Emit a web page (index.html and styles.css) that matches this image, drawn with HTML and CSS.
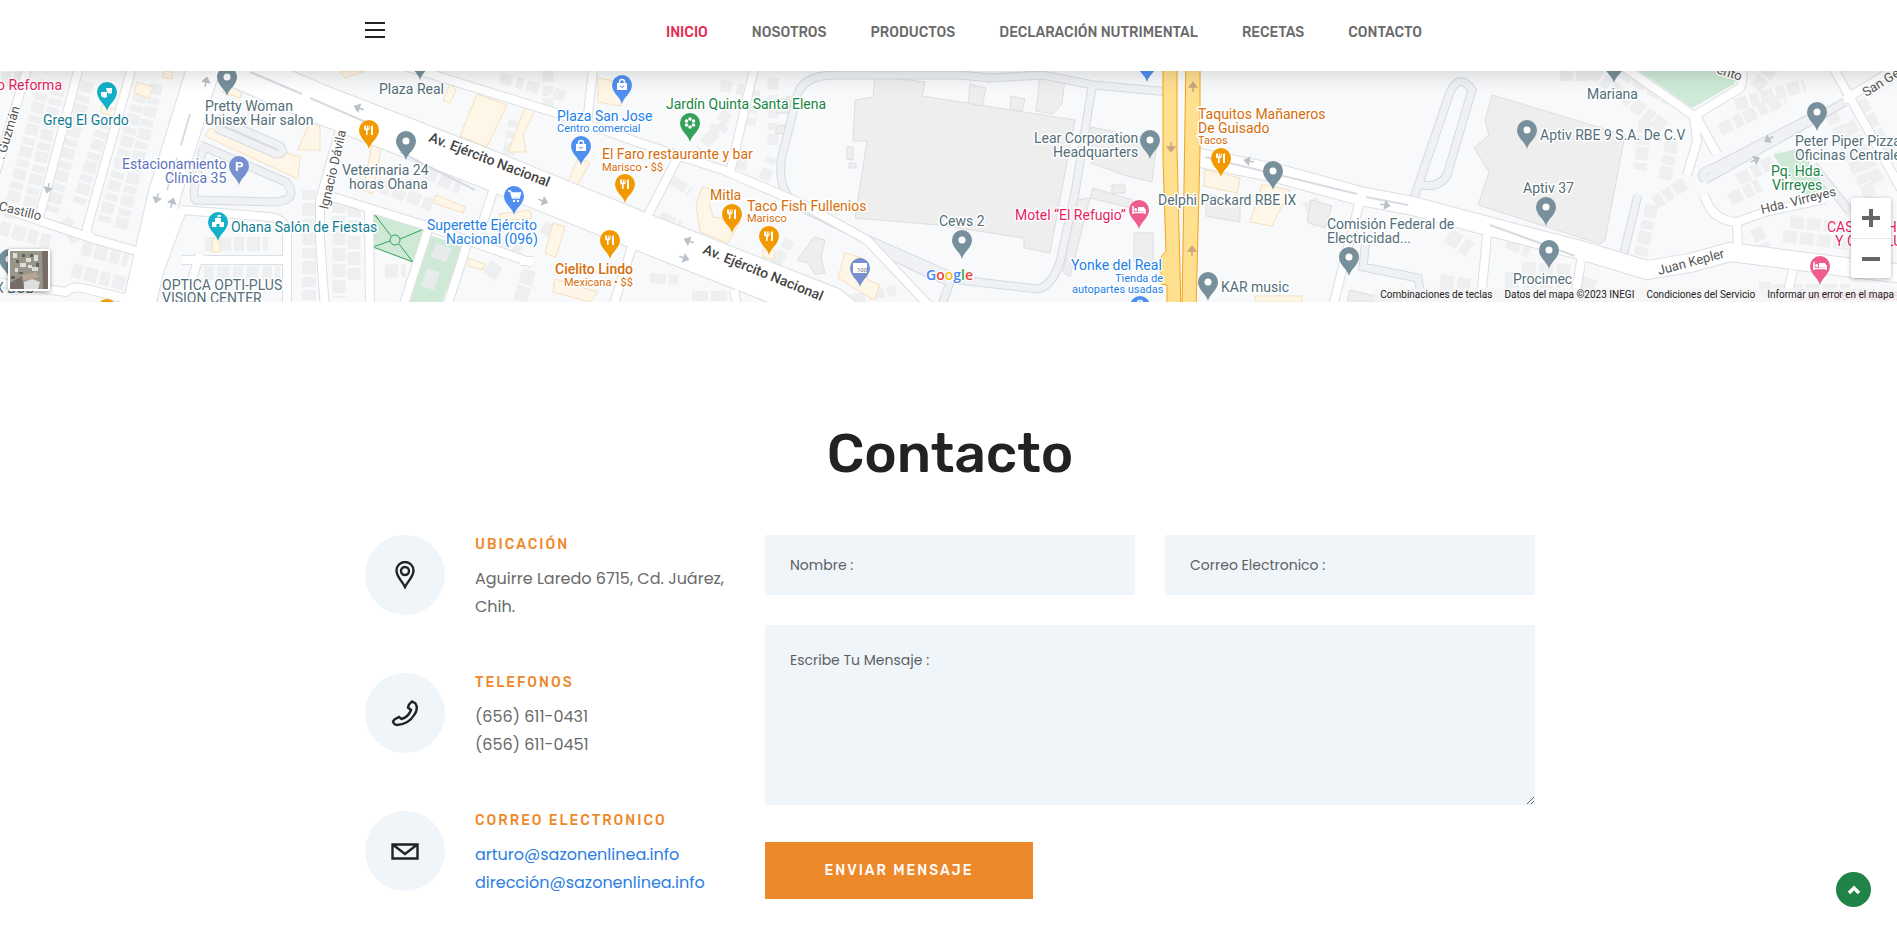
FILE: index.html
```html
<!DOCTYPE html>
<html lang="es">
<head>
<meta charset="utf-8">
<meta name="viewport" content="width=device-width, initial-scale=1">
<title>Contacto</title>
<link rel="stylesheet" href="styles.css">
</head>
<body>
<header class="site-header">
  <div class="container header-row">
    <button class="menu-toggle" type="button" aria-label="Menú"><span></span><span></span><span></span></button>
    <nav class="main-nav">
      <a class="active" href="#">INICIO</a>
      <a href="#">NOSOTROS</a>
      <a href="#">PRODUCTOS</a>
      <a href="#">DECLARACIÓN NUTRIMENTAL</a>
      <a href="#">RECETAS</a>
      <a href="#">CONTACTO</a>
    </nav>
  </div>
</header>

<section class="map" aria-label="Mapa">
  <svg class="map-canvas" viewBox="0 71 1897 231" preserveAspectRatio="xMidYMid slice">
    <defs>
      <path id="pin" d="M0 19C-1.500 12-10 8-10 0A10 10 0 1 1 10 0C10 8 1.500 12 0 19Z"/>
      <g id="dot"><use href="#pin"/><circle r="3.500" fill="#fff"/></g>
      <g id="food"><use href="#pin"/><path d="M-5-4.500v3q0 2 2 2V5h1.600V.500q2 0 2-2v-3h-1v3h-.800v-3h-1v3h-.800v-3zM2 5V-1Q1-4 4-5V5z" fill="#fff"/></g>
      <g id="bag"><use href="#pin"/><path d="M-5-2H5V5H-5z" fill="#fff"/><path d="M-2.500-2V-3a2.500 2.500 0 0 1 5 0v1" fill="none" stroke="#fff" stroke-width="1.500"/><path d="M-2 1q2 3 4 0" fill="none" stroke="#4f8ff0"/></g>
      <g id="bed"><use href="#pin"/><path d="M-6-4V4M-6 2.500H6M6 4V-1" stroke="#fff" stroke-width="1.600" fill="none"/><path d="M-1-3H5l1 2V1.500H-1z" fill="#fff"/><circle cx="-3.300" cy="-.500" r="1.500" fill="#fff"/></g>
      <path id="arrow" d="M-5 0H3M0-3.500L4.500 0L0 3.500z"/>
      <g id="streets" fill="none" stroke-linejoin="round">
        <path d="M30 60L-6 178M81 60L38 222M134 60L88 224Q84 235 94 239L140 252M-5 205L43 222L94 239M-5 282L66 292Q74 285 86 289L140 302" stroke-width="var(--w)"/>
        <path d="M182 210L270 217Q287 220 287 235V310M182 260H285M182 210L145 310M200 254L182 310" stroke-width="var(--w)"/>
        <path d="M340 130L320 200V240L325 310M320 193L430 227L532 263M369 210L370 310M428 230L402 310M467 244L446 310M495 185L481 228M632 247L612 310M520 261H533" stroke-width="var(--w)"/>
        <path d="M405 66L553 112L640 143L723 170L800 203L867 240L935 312M594 60L587 124M756 60L730 173M678 157L648 215M734 290L738 310" stroke-width="var(--w)"/>
        <path d="M1360 200L1332 310M1487 235L1480 310M1582 255L1573 310M1614 60L1694 116L1740 88Q1744 82 1742 60M1694 116L1697 142L1687 175M1697 118L1717 154M1704 195Q1712 221 1737 222L1765 212L1825 199M1737 222L1738 251M1829 60L1905 196M1844 100L1905 63M1793 270L1784 310" stroke-width="var(--w)"/>
      </g>
      <g id="drives" fill="none">
        <path d="M1170 92L1093 85L1043 75L990 78L960 75H835Q800 75 796 100Q789 130 782 155Q776 190 797 205L860 236L960 280L1038 289Q1052 286 1060 262L1075 193L1092 87"/>
        <path d="M1414 198L1450 92Q1460 72 1472 90L1447 175Q1440 188 1421 185M1366 240L1363 267L1418 278L1422 302M1705 180L1845 102M1713 168L1810 118M1705 180Q1697 172 1713 168M1638 195L1621 264M1813 165L1850 212M200 145L286 182Q300 200 275 202L196 200Q190 196 203 150M216 118L280 146Q287 154 276 154L216 128M875 248L930 274L950 282L940 310"/>
      </g>
    </defs>

    <rect x="-500" y="0" width="3000" height="400" fill="#f8f9fa"/>

    <!-- rows of houses -->
    <g class="houses">
      <path d="M45 80L8 218M59 85L28 212M88 82L52 212M106 118L78 205M141 92L104 222M157 84L120 230" stroke-width="13" stroke-dasharray="11 3 7 2"/>
      <path d="M63 220L78 240M0 228L50 242M82 248L128 260M72 270L125 284M205 244H268M204 273H280M309 190V300M1 79H30" stroke-width="14" stroke-dasharray="10 3 13 3"/>
      <path d="M339 200V298M354 204V280M385 271H406M378 185L432 205M425 172L460 188" stroke-width="13" stroke-dasharray="13 3"/>
      <path d="M439 242L417 302M453 247L432 302M480 238L520 254M529 270L520 302M497 264L488 278M545 235L552 225" stroke-width="14" stroke-dasharray="15 2"/>
      <path d="M500 78L565 96M548 70V112M508 155L514 120M720 85L745 90M728 112L700 150M755 90L750 125M773 78V145M764 180L772 155M740 170L745 150M707 140L725 125" stroke-width="11" stroke-dasharray="12 5 7 4"/>
      <path d="M660 216L680 226M650 278L678 280M692 296L730 296M775 265L790 240M850 300L896 290M672 180L690 192" stroke-width="10" stroke-dasharray="16 3"/>
      <path d="M1448 235L1470 250M1440 282L1470 287M1508 240L1530 250M1505 280L1560 280M1522 270L1572 272M1590 278L1580 300M1310 200L1320 225" stroke-width="16" stroke-dasharray="14 3"/>
      <path d="M1590 70L1665 128M1645 120L1640 170M1672 140L1664 182M1652 205L1640 258M1685 183L1655 203M1720 130L1785 98M1735 105L1805 85M1755 88L1775 65M1738 180L1785 155M1730 200L1760 185M1830 112L1875 205M1848 122L1880 185" stroke-width="13" stroke-dasharray="13 3 9 2"/>
      <path d="M1783 236L1848 244M1790 222L1845 228M1755 228L1765 248M1772 290L1850 290M1590 75H1560M1645 80L1620 65M1605 62L1670 100M1765 282V300M1860 100L1890 155" stroke-width="12" stroke-dasharray="14 3"/>
    </g>

    <!-- large buildings -->
    <g fill="#eeeeef" stroke="#dcdee2">
      <path d="M875 76L925 82L922 96L1075 120L1050 253L1024 248V238L938 225L855 218L867 141H853L855 100L873 97zM1091 127L1157 140L1152 182L1127 176L1091 163zM1093 188L1133 200L1130 208L1090 198zM1076 200L1090 198L1070 277L1063 272zM1134 233H1153V262H1134zM797 260L814 237L825 240L821 258L825 273L815 274L808 263zM1206 195L1240 199V222L1206 216z"/>
      <path d="M1492 95L1625 135L1605 240L1600 244L1478 205L1489 172L1474 148L1489 135L1485 120zM1311 200L1332 206L1325 228L1307 222zM1350 290L1400 302H1347zM970 84L986 88L982 106L968 103zM1011 96L1025 99L1022 111L1010 109zM1040 75L1065 79L1062 104L1053 114L1036 111z"/>
      <path d="M777 98L790 100V113H776zM778 126L789 124V135L775 133zM787 96L795 98V106H786zM847 147H853V160L847 159zM849 163H856V168H849zM1112 185H1125V193H1112z"/>
    </g>
    <g fill="#fef7e8" stroke="#f7dfbf">
      <path d="M137 82L153 87L149 98L134 93zM210 128L300 157L298 179L205 136zM102 105L117 110L115 117L101 113zM165 71H172V79L162 77zM228 80L243 86L240 98L222 92zM310 122L320 127V150L298 150L302 140zM477 94L507 105L487 147L460 136zM525 107L535 111L523 135L526 152L508 152zM372 145L381 149L373 194L363 190zM436 195L465 207L463 213L434 203zM553 223L565 227L556 257L545 253zM598 78L626 83L620 106L598 102zM578 158L590 163L576 188L567 185z"/>
      <path d="M702 187L718 191L709 203L713 217L740 222L728 243L700 232L696 205zM845 253L862 258L868 280L880 285L874 300L838 278zM1205 170L1240 178L1237 193L1204 186zM1262 184L1290 190L1272 226L1250 222zM555 279L598 292L590 302L553 292zM468 258L485 264L483 270L468 266zM213 238L220 238V252L212 252zM763 244L775 251L774 260L763 257zM450 84L456 90L450 103L443 100zM500 214L530 210L532 218L500 221zM1255 296H1302V302H1255zM340 71L365 71L345 78z"/>
    </g>
    <g fill="#ceead6">
      <path d="M372 211L424 229L413 262L373 247zM430 235L463 247L442 302H410zM1640 71L1692 108L1734 84L1740 71zM1773 155L1800 148L1822 180L1829 196L1804 196z"/>
      <path d="M436 243L452 249L446 262L431 257zM427 268L440 272L434 290L421 286z" fill="#e8ebec"/>
      <g fill="none" stroke="#34a05a"><path d="M372 211L391 236M424 229L400 239M413 262L399 244M373 247L390 241"/><path d="M373 247L413 262M372 211L378 219"/><circle cx="395" cy="240" r="5"/></g>
    </g>

    <use href="#drives" stroke="#d7dade" stroke-width="9"/>
    <use href="#drives" stroke="#eff1f4" stroke-width="7"/>

    <g class="road-edge"><use href="#streets"/>
      <g fill="none"><path d="M206 60L165 193L138 310" stroke-width="34"/><path d="M195 50L320 104L480 166L640 231L830 306L860 330" stroke-width="40"/><path d="M1195 157L1280 174L1360 196L1413 206L1480 224L1580 250L1647 270L1690 263L1730 252L1853 268L1905 274" stroke-width="20"/></g>
    </g>
    <g class="road-fill"><use href="#streets"/>
      <g fill="none"><path d="M206 60L165 193L138 310" stroke-width="32"/><path d="M195 50L320 104L480 166L640 231L830 306L860 330" stroke-width="38"/><path d="M1195 157L1280 174L1360 196L1413 206L1480 224L1580 250L1647 270L1690 263L1730 252L1853 268L1905 274" stroke-width="18"/></g>
    </g>
    <g fill="none" stroke="#d9dbe3" stroke-width="2"><path d="M190 114L181 145M177 158L167 190M250 72L302 94M310 98L368 123M400 152L475 190M1205 157L1357 194M1366 197L1408 205M1490 225L1575 256"/></g>
    <g fill="#ffe08f" stroke="#f2a21d" stroke-width="1"><path d="M1163 60V160L1166 251L1161 257V284L1167 285V310H1181L1177 150V60zM1186 60L1182 310H1196L1200 150V60z"/></g>
    <g fill="#bac1c8" stroke="#bac1c8" stroke-width="1.500">
      <use href="#arrow" transform="translate(206 82) rotate(-78)"/><use href="#arrow" transform="translate(48 188) rotate(105)"/><use href="#arrow" transform="translate(157 198) rotate(105)"/><use href="#arrow" transform="translate(172 203) rotate(-75)"/>
      <use href="#arrow" transform="translate(359 108) rotate(200)"/><use href="#arrow" transform="translate(543 201) rotate(20)"/><use href="#arrow" transform="translate(689 241) rotate(200)"/><use href="#arrow" transform="translate(684 258) rotate(20)"/>
      <use href="#arrow" transform="translate(1249 161) rotate(190)"/><use href="#arrow" transform="translate(1385 205) rotate(10)"/><use href="#arrow" transform="translate(1769 139) rotate(150)"/><use href="#arrow" transform="translate(1755 160) rotate(-25)"/>
    </g>
    <g fill="#c9a57d" stroke="#c9a57d" stroke-width="1.500"><use href="#arrow" transform="translate(1171 147) rotate(90)"/><use href="#arrow" transform="translate(1193 87) rotate(-90)"/><use href="#arrow" transform="translate(1192 251) rotate(-90)"/></g>

    <!-- pins -->
    <g fill="#78909c">
      <use href="#dot" x="227" y="77"/><use href="#dot" x="9" y="259"/><use href="#dot" x="420" y="61"/><use href="#dot" x="406" y="141"/><use href="#dot" x="962" y="240"/><use href="#dot" x="1150" y="140"/><use href="#dot" x="1273" y="171"/><use href="#dot" x="1208" y="282"/><use href="#dot" x="1349" y="257"/><use href="#dot" x="1527" y="130"/><use href="#dot" x="1546" y="207"/><use href="#dot" x="1549" y="250"/><use href="#dot" x="1614" y="64"/><use href="#dot" x="1817" y="112"/>
    </g>
    <g fill="#f29900">
      <use href="#food" x="369" y="130"/><use href="#food" x="625" y="184"/><use href="#food" x="610" y="240"/><use href="#food" x="732" y="214"/><use href="#food" x="769" y="236"/><use href="#food" x="1221" y="158"/><use href="#food" x="107" y="309"/>
    </g>
    <g fill="#4f8ff0">
      <use href="#bag" x="622" y="85"/><use href="#bag" x="581" y="146"/><use href="#bag" x="1147" y="63"/><use href="#bag" x="1140" y="306"/><use href="#pin" x="514" y="196"/>
      <path d="M508 191H510.500L512.500 198H519L520.500 193H511" fill="none" stroke="#fff" stroke-width="1.500"/><path d="M511 193H520L518.500 197H512.500zM513 200h2v2h-2zM517 200h2v2h-2z" fill="#fff"/>
    </g>
    <g fill="#ee5c8b"><use href="#bed" x="1139" y="210"/><use href="#bed" x="1820" y="266"/></g>
    <g fill="#12b0c9"><use href="#pin" x="107" y="92"/><use href="#pin" x="218" y="222"/>
      <path d="M101 92H107V97Q104 99 101 96zM106 88H112V93Q109 95 107 92zM212 222H215V218H221V222H224V227H219.500V224H216.500V227H212zM217.500 215H221V217H218.500V219H217.500z" fill="#fff"/></g>
    <g fill="#7790cf"><use href="#pin" x="239" y="166"/><use href="#pin" x="860" y="268"/><path d="M853 263H867V273H853z" fill="#fff"/></g>
    <text x="235" y="171" class="pin-letter">P</text><text x="857" y="272" class="pin-number">100</text>
    <g><use href="#pin" x="690" y="123" fill="#34a05a"/><g fill="#fff"><circle cx="690" cy="119" r="1.800"/><circle cx="690" cy="127" r="1.800"/><circle cx="686.500" cy="121" r="1.800"/><circle cx="693.500" cy="121" r="1.800"/><circle cx="686.500" cy="125" r="1.800"/><circle cx="693.500" cy="125" r="1.800"/></g></g>

    <!-- labels -->
    <g class="label place">
      <text x="205" y="111">Pretty Woman</text><text x="205" y="125">Unisex Hair salon</text>
      <text x="379" y="94">Plaza Real</text>
      <text x="342" y="175">Veterinaria 24</text><text x="349" y="189">horas Ohana</text>
      <text x="162" y="290">OPTICA OPTI-PLUS</text><text x="162" y="303">VISION CENTER</text>
      <text x="-5" y="293">X BOB</text>
      <text x="939" y="226">Cews 2</text>
      <text x="1034" y="143">Lear Corporation</text><text x="1053" y="157">Headquarters</text>
      <text x="1158" y="205">Delphi Packard RBE IX</text><text x="1221" y="292">KAR music</text>
      <text x="1327" y="229">Comisión Federal de</text><text x="1327" y="243">Electricidad...</text>
      <text x="1540" y="140">Aptiv RBE 9 S.A. De C.V</text><text x="1523" y="193">Aptiv 37</text><text x="1513" y="284">Procimec</text>
      <text x="1587" y="99">Mariana</text><text x="1795" y="146">Peter Piper Pizza</text><text x="1795" y="160">Oficinas Centrales</text>
    </g>
    <g class="label teal"><text x="43" y="125">Greg El Gordo</text><text x="231" y="232">Ohana Salón de Fiestas</text></g>
    <g class="label indigo"><text x="122" y="169">Estacionamiento</text><text x="165" y="183">Clínica 35</text></g>
    <g class="label blue">
      <text x="557" y="121">Plaza San Jose</text><text x="557" y="132" class="sub">Centro comercial</text>
      <text x="427" y="230">Superette Ejército</text><text x="446" y="244">Nacional (096)</text>
      <text x="1071" y="270">Yonke del Real</text><text x="1115" y="282" class="sub">Tienda de</text><text x="1072" y="293" class="sub">autopartes usadas</text>
    </g>
    <g class="label orange">
      <text x="602" y="159">El Faro restaurante y bar</text><text x="602" y="171" class="sub">Marisco • $$</text>
      <text x="555" y="274" class="strong">Cielito Lindo</text><text x="564" y="286" class="sub">Mexicana • $$</text>
      <text x="710" y="200">Mitla</text><text x="747" y="211">Taco Fish Fullenios</text><text x="747" y="222" class="sub">Marisco</text>
      <text x="1198" y="119">Taquitos Mañaneros</text><text x="1198" y="133">De Guisado</text><text x="1198" y="144" class="sub">Tacos</text>
    </g>
    <g class="label green"><text x="666" y="109">Jardín Quinta Santa Elena</text><text x="1771" y="176">Pq. Hda.</text><text x="1772" y="190">Virreyes</text></g>
    <g class="label pink">
      <text x="-3" y="90">o Reforma</text><text x="1015" y="220">Motel “El Refugio”</text>
      <text x="1827" y="232">CASA DE HU</text><text x="1835" y="246">Y CASA LUZ</text><text x="1798" y="300" opacity=".5">Casa de Huéspedes</text>
    </g>
    <g class="label street">
      <text class="avenue" transform="translate(428 141) rotate(21)">Av. Ejército Nacional</text>
      <text class="avenue" transform="translate(702 253) rotate(22)">Av. Ejército Nacional</text>
      <text transform="translate(4 160) rotate(-73)">. Guzmán</text><text transform="translate(328 210) rotate(-77)">Ignacio Dávila</text>
      <text transform="translate(-2 210) rotate(14)">Castillo</text><text transform="translate(1659 275) rotate(-15)">Juan Kepler</text>
      <text transform="translate(1762 214) rotate(-14)">Hda. Virreyes</text><text transform="translate(1866 97) rotate(-32)">San Gerardo</text><text transform="translate(1716 73) rotate(18)">ento</text>
    </g>
    <text class="google" x="926" y="280"><tspan fill="#4285f4">G</tspan><tspan fill="#ea4335">o</tspan><tspan fill="#fbbc05">o</tspan><tspan fill="#4285f4">g</tspan><tspan fill="#34a853">l</tspan><tspan fill="#ea4335">e</tspan></text>
  </svg>

  <button class="map-layer" type="button" aria-label="Vista satélite">
    <svg viewBox="0 0 38 38" width="38" height="38"><path d="M0 0H38V38H0z" fill="#989589"/><path d="M32 0H38V38H33zM0 32L12 25L14 38H0z" fill="#776c68"/><path d="M3 2h4v5H3zM16 7h5v4h-5zM10 12h6v4h-6zM22 16h6v4h-6zM5 17h3v4H5zM24 4h4v6h-4zM14 31l8-3 8 3-2 7H14zM18 14h4v3h-4z" fill="#dcdedb"/><path d="M1 25h4v3H1zM6 9h3v3H6zM12 3h3v3h-3zM26 12h3v4h-3zM9 21h4v2H9zM20 3h3v3h-3z" fill="#5f6058"/><path d="M12 24l14-3 3 5-16 4z" fill="#b7a492"/></svg>
  </button>
  <div class="map-zoom">
    <button type="button" aria-label="Acercar"><svg width="18" height="18" viewBox="0 0 18 18"><path d="M7 0h4v7h7v4h-7v7H7v-7H0V7h7z" fill="#666"/></svg></button>
    <button type="button" aria-label="Alejar"><svg width="18" height="18" viewBox="0 0 18 18"><path d="M0 7h18v4H0z" fill="#666"/></svg></button>
  </div>
  <div class="map-legal">
    <button type="button">Combinaciones de teclas</button><span>Datos del mapa ©2023 INEGI</span><a href="#">Condiciones del Servicio</a><a href="#">Informar un error en el mapa</a>
  </div>
</section>

<main class="container contact">
  <h1>Contacto</h1>
  <div class="contact-grid">
    <address class="info-list">
      <div class="info">
        <span class="info-icon"><svg width="28" height="28" viewBox="0 0 28 28" stroke-width="2.400"><path d="M14 26C12 21 5.500 16 5.500 9.500a8.500 8.500 0 0 1 17 0C22.500 16 16 21 14 26z"/><circle cx="14" cy="10" r="4"/></svg></span>
        <div><h2>UBICACIÓN</h2><p>Aguirre Laredo 6715, Cd. Juárez, Chih.</p></div>
      </div>
      <div class="info">
        <span class="info-icon"><svg width="28" height="28" viewBox="0 0 28 28" stroke-width="2.400"><path d="M18 5.500L21 2.500L24.500 4.500Q27.500 9.500 23.500 15.500Q17.500 25.500 6 26Q3 26 2 22.500L3.500 20.500L8 18L10.500 20Q17.500 18 20 11L17 8.500z"/></svg></span>
        <div><h2>TELEFONOS</h2><p>(656) 611-0431<br>(656) 611-0451</p></div>
      </div>
      <div class="info">
        <span class="info-icon"><svg width="28" height="28" viewBox="0 0 28 28" stroke-width="2.400"><path d="M1.500 7.500H26.500V21.500H1.500zM3 8.500L14 17L25 8.500"/></svg></span>
        <div><h2>CORREO ELECTRONICO</h2><p><a href="#">arturo@sazonenlinea.info</a><br><a href="#">dirección@sazonenlinea.info</a></p></div>
      </div>
    </address>
    <form class="contact-form">
      <input type="text" aria-label="Nombre" placeholder="Nombre :">
      <input type="email" aria-label="Correo Electronico" placeholder="Correo Electronico :">
      <textarea aria-label="Mensaje" placeholder="Escribe Tu Mensaje :"></textarea>
      <button type="button">ENVIAR MENSAJE</button>
    </form>
  </div>
</main>
<a class="to-top" href="#" aria-label="Volver arriba"><svg width="14" height="10" viewBox="0 0 14 10"><path d="M2 8L7 3L12 8" fill="none" stroke="#fff" stroke-width="3.500"/></svg></a>
</body>
</html>
```

FILE: styles.css
```css
* { box-sizing: border-box; }
body { margin: 0; background: #fff; color: #6a6a6a; font-family: Poppins, Inter, sans-serif; font-size: 16px; line-height: 28px; }
a { color: #2a7de1; text-decoration: none; }
button { border: 0; padding: 0; background: none; font: inherit; cursor: pointer; }
.container { width: 100%; max-width: 1201px; margin: 0 auto; padding: 0 14px 0 17px; }

.site-header { position: sticky; top: 0; z-index: 5; background: #fff; box-shadow: 0 0 25px rgba(0, 0, 0, .2); }
.header-row { display: flex; align-items: center; justify-content: space-between; height: 71px; padding-bottom: 6px; }
.menu-toggle { display: grid; gap: 5px; width: 20px; padding-bottom: 6px; }
.menu-toggle span { height: 2px; background: #222; }
.main-nav { display: flex; gap: 44px; margin-right: 113px; font: 500 14px/20px Rubik, Roboto, sans-serif; }
.main-nav a { color: #6a6a6a; }
.main-nav .active { color: #df2b4f; }

.map { position: relative; height: 231px; overflow: hidden; }
.map-canvas { display: block; width: 100%; height: 100%; --w: 9px; }
.houses { fill: none; stroke: #eeeff1; }
.road-edge { stroke: #dcdfe3; --w: 10px; }
.road-fill { stroke: #fff; --w: 8px; }
.label { font: 14px Roboto, sans-serif; paint-order: stroke; stroke: #fff; stroke-width: 3px; stroke-linejoin: round; }
.label .sub { font-size: 11px; }
.label .strong { font-weight: 500; }
.place { fill: #546e7a; }
.teal { fill: #127d92; }
.indigo { fill: #5c73bd; }
.blue { fill: #1e7fe8; }
.orange { fill: #d56e0c; }
.green { fill: #188544; }
.pink { fill: #e51f61; }
.street { fill: #555; font-size: 13px; }
.street .avenue { fill: #444; font-size: 14px; font-weight: 500; }
.pin-letter { font: 700 13px Roboto, sans-serif; fill: #fff; }
.pin-number { font: 6px Roboto, sans-serif; fill: #667; }
.google { font: 600 14px "Open Sans", sans-serif; paint-order: stroke; stroke: #fff; stroke-width: 2px; }
.map-layer { position: absolute; left: 8px; bottom: 11px; width: 42px; height: 42px; border: 2px solid #fff; border-radius: 2px; box-shadow: 0 1px 4px rgba(0, 0, 0, .4); }
.map-layer svg { display: block; }
.map-zoom { position: absolute; right: 6px; bottom: 24px; width: 40px; background: #fff; border-radius: 2px; box-shadow: 0 1px 4px rgba(0, 0, 0, .3); }
.map-zoom button { display: grid; place-items: center; width: 40px; height: 40px; }
.map-zoom button + button { border-top: 1px solid #e6e6e6; }
.map-legal { position: absolute; right: 0; bottom: 0; display: flex; font: 10px/14px Roboto, sans-serif; color: #222; background: rgba(245, 245, 245, .7); }
.map-legal > * { padding: 0 6px; color: inherit; }
.map-legal > :last-child { padding-right: 3px; }

.contact { padding-top: 118px; padding-bottom: 28px; }
h1 { margin: 0 0 48px; color: #222; font: 500 55px/67px Rubik, Inter, sans-serif; text-align: center; }
.contact-grid { display: grid; grid-template-columns: 370fr 770fr; gap: 30px; }
.info-list { display: grid; align-content: start; gap: 52px; font-style: normal; }
.info { display: grid; grid-template-columns: 80px 1fr; gap: 30px; }
.info-icon { display: grid; place-items: center; width: 80px; height: 80px; border-radius: 50%; background: #f0f5fa; }
.info-icon svg { fill: none; stroke: #222; }
.info h2 { margin: 0 0 10px; color: #ee892b; font: 500 14px/20px Rubik, Roboto, sans-serif; letter-spacing: 2px; }
.info p { margin: 0; }
.contact-form { display: grid; grid-template-columns: 1fr 1fr; gap: 30px; }
.contact-form input, .contact-form textarea { width: 100%; height: 60px; padding: 0 25px; border: 0; border-radius: 0; background: #f0f5fa; color: #555; font: 14px/24px Poppins, Inter, sans-serif; }
.contact-form textarea { display: block; grid-column: 1 / -1; height: 180px; padding-top: 23px; resize: vertical; }
.contact-form ::placeholder { color: #5c6064; opacity: 1; }
.contact-form button { grid-column: 1 / -1; justify-self: start; margin-top: 7px; width: 268px; height: 57px; background: #ee892b; color: #fff; font: 500 14px/20px Rubik, Roboto, sans-serif; letter-spacing: 2px; }
.to-top { position: fixed; right: 26px; bottom: 19px; display: grid; place-items: center; width: 35px; height: 35px; border-radius: 50%; background: #208449; }
```
